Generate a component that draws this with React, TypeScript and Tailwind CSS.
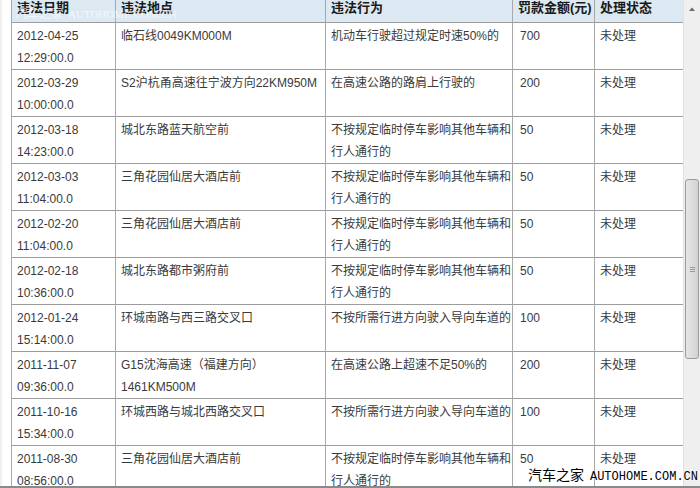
import React from "react";

type Row = { date: [string, string]; place: string[]; act: string[]; fine: string; status: string };

const A = ["不按规定临时停车影响其他车辆和", "行人通行的"];
const B = ["不按所需行进方向驶入导向车道的"];

const rows: Row[] = [
  { date: ["2012-04-25", "12:29:00.0"], place: ["临石线0049KM000M"], act: ["机动车行驶超过规定时速50%的"], fine: "700", status: "未处理" },
  { date: ["2012-03-29", "10:00:00.0"], place: ["S2沪杭甬高速往宁波方向22KM950M"], act: ["在高速公路的路肩上行驶的"], fine: "200", status: "未处理" },
  { date: ["2012-03-18", "14:23:00.0"], place: ["城北东路蓝天航空前"], act: A, fine: "50", status: "未处理" },
  { date: ["2012-03-03", "11:04:00.0"], place: ["三角花园仙居大酒店前"], act: A, fine: "50", status: "未处理" },
  { date: ["2012-02-20", "11:04:00.0"], place: ["三角花园仙居大酒店前"], act: A, fine: "50", status: "未处理" },
  { date: ["2012-02-18", "10:36:00.0"], place: ["城北东路都市粥府前"], act: A, fine: "50", status: "未处理" },
  { date: ["2012-01-24", "15:14:00.0"], place: ["环城南路与西三路交叉口"], act: B, fine: "100", status: "未处理" },
  { date: ["2011-11-07", "09:36:00.0"], place: ["G15沈海高速（福建方向）", "1461KM500M"], act: ["在高速公路上超速不足50%的"], fine: "200", status: "未处理" },
  { date: ["2011-10-16", "15:34:00.0"], place: ["环城西路与城北西路交叉口"], act: B, fine: "100", status: "未处理" },
  { date: ["2011-08-30", "08:56:00.0"], place: ["三角花园仙居大酒店前"], act: A, fine: "50", status: "未处理" },
];

function Cell({ lines, last }: { lines: string[]; last?: boolean }) {
  return (
    <div className={`h-[47px] border-b border-[#9c9c9c] pl-[5px] pt-[2px] leading-[22px] whitespace-nowrap overflow-hidden ${last ? "" : "border-r border-r-[#a8a8a8]"}`}>
      {lines.map((l, i) => (
        <div key={i}>{l}</div>
      ))}
    </div>
  );
}

function HeadCell({ text, last }: { text: string; last?: boolean }) {
  return (
    <div className={`h-[23px] border-b border-[#9c9c9c] pl-[5px] text-[13px] font-bold leading-[15px] text-[#1a1a1a] whitespace-nowrap ${last ? "" : "border-r border-r-[#a8a8a8]"}`}>
      {text}
    </div>
  );
}

export default function App() {
  return (
    <div className="relative w-[700px] h-[488px] overflow-hidden bg-white font-['Liberation_Sans','Noto_Sans_CJK_SC',sans-serif] text-[12px] text-[#3a3a3a]">
      <div className="flex h-full">
        <div className="w-[11px] border-l-[2px] border-[#f0f0f0]" />
        <div className="w-[672px] border-l border-[#a8a8a8]">
          <div className="grid grid-cols-[104px_210px_187px_82px_88px] bg-[#dce9f2]">
            <HeadCell text="违法日期" />
            <HeadCell text="违法地点" />
            <HeadCell text="违法行为" />
            <HeadCell text="罚款金额(元)" />
            <HeadCell text="处理状态" last />
          </div>
          <div className="grid grid-cols-[104px_210px_187px_82px_88px]">
            {rows.map((r, i) => (
              <React.Fragment key={i}>
                <Cell lines={r.date} />
                <Cell lines={r.place} />
                <Cell lines={r.act} />
                <div className="h-[47px] border-b border-r border-[#9c9c9c] border-r-[#a8a8a8] pl-[7px] pt-[2px] leading-[22px]">{r.fine}</div>
                <Cell lines={[r.status]} last />
              </React.Fragment>
            ))}
          </div>
        </div>
        <div className="relative w-[17px] bg-[#efefef] border-l border-[#e2e2e2]">
          <svg className="absolute left-[4px] top-[6px]" width="8" height="6" viewBox="0 0 8 6">
            <path d="M1 5 L4 1.5 L7 5 Z" fill="#6a6a6a" />
          </svg>
          <div className="absolute left-[1px] top-[179px] w-[14px] h-[180px] rounded-[3px] border border-[#9a9a9a] bg-gradient-to-r from-[#e6e6e6] to-[#d2d2d2] flex flex-col items-center justify-center gap-[1px]">
            <div className="w-[5px] h-px bg-[#9a9a9a]" />
            <div className="w-[5px] h-px bg-[#9a9a9a]" />
            <div className="w-[5px] h-px bg-[#9a9a9a]" />
          </div>
        </div>
      </div>
      <div className="absolute left-0 right-0 bottom-0 h-[2px] bg-[#8a8a8a]" />
      <div className="absolute left-[15px] top-[4px] flex items-baseline gap-[5px] text-white/70 text-[12px]">
        <span className="font-['Noto_Sans_CJK_SC',sans-serif]">汽车之家</span>
        <span className="font-['Liberation_Serif',serif] text-[11px]">AUTOHOME.COM.CN</span>
      </div>
      <div className="absolute right-[2px] bottom-[2px] flex items-baseline gap-[6px] text-black [text-shadow:0_0_2px_#fff,0_0_2px_#fff]">
        <span className="font-['Noto_Sans_CJK_SC',sans-serif] text-[14px] leading-[18px]">汽车之家</span>
        <span className="font-['Liberation_Mono',monospace] text-[12px] leading-[18px]">AUTOHOME.COM.CN</span>
      </div>
    </div>
  );
}
